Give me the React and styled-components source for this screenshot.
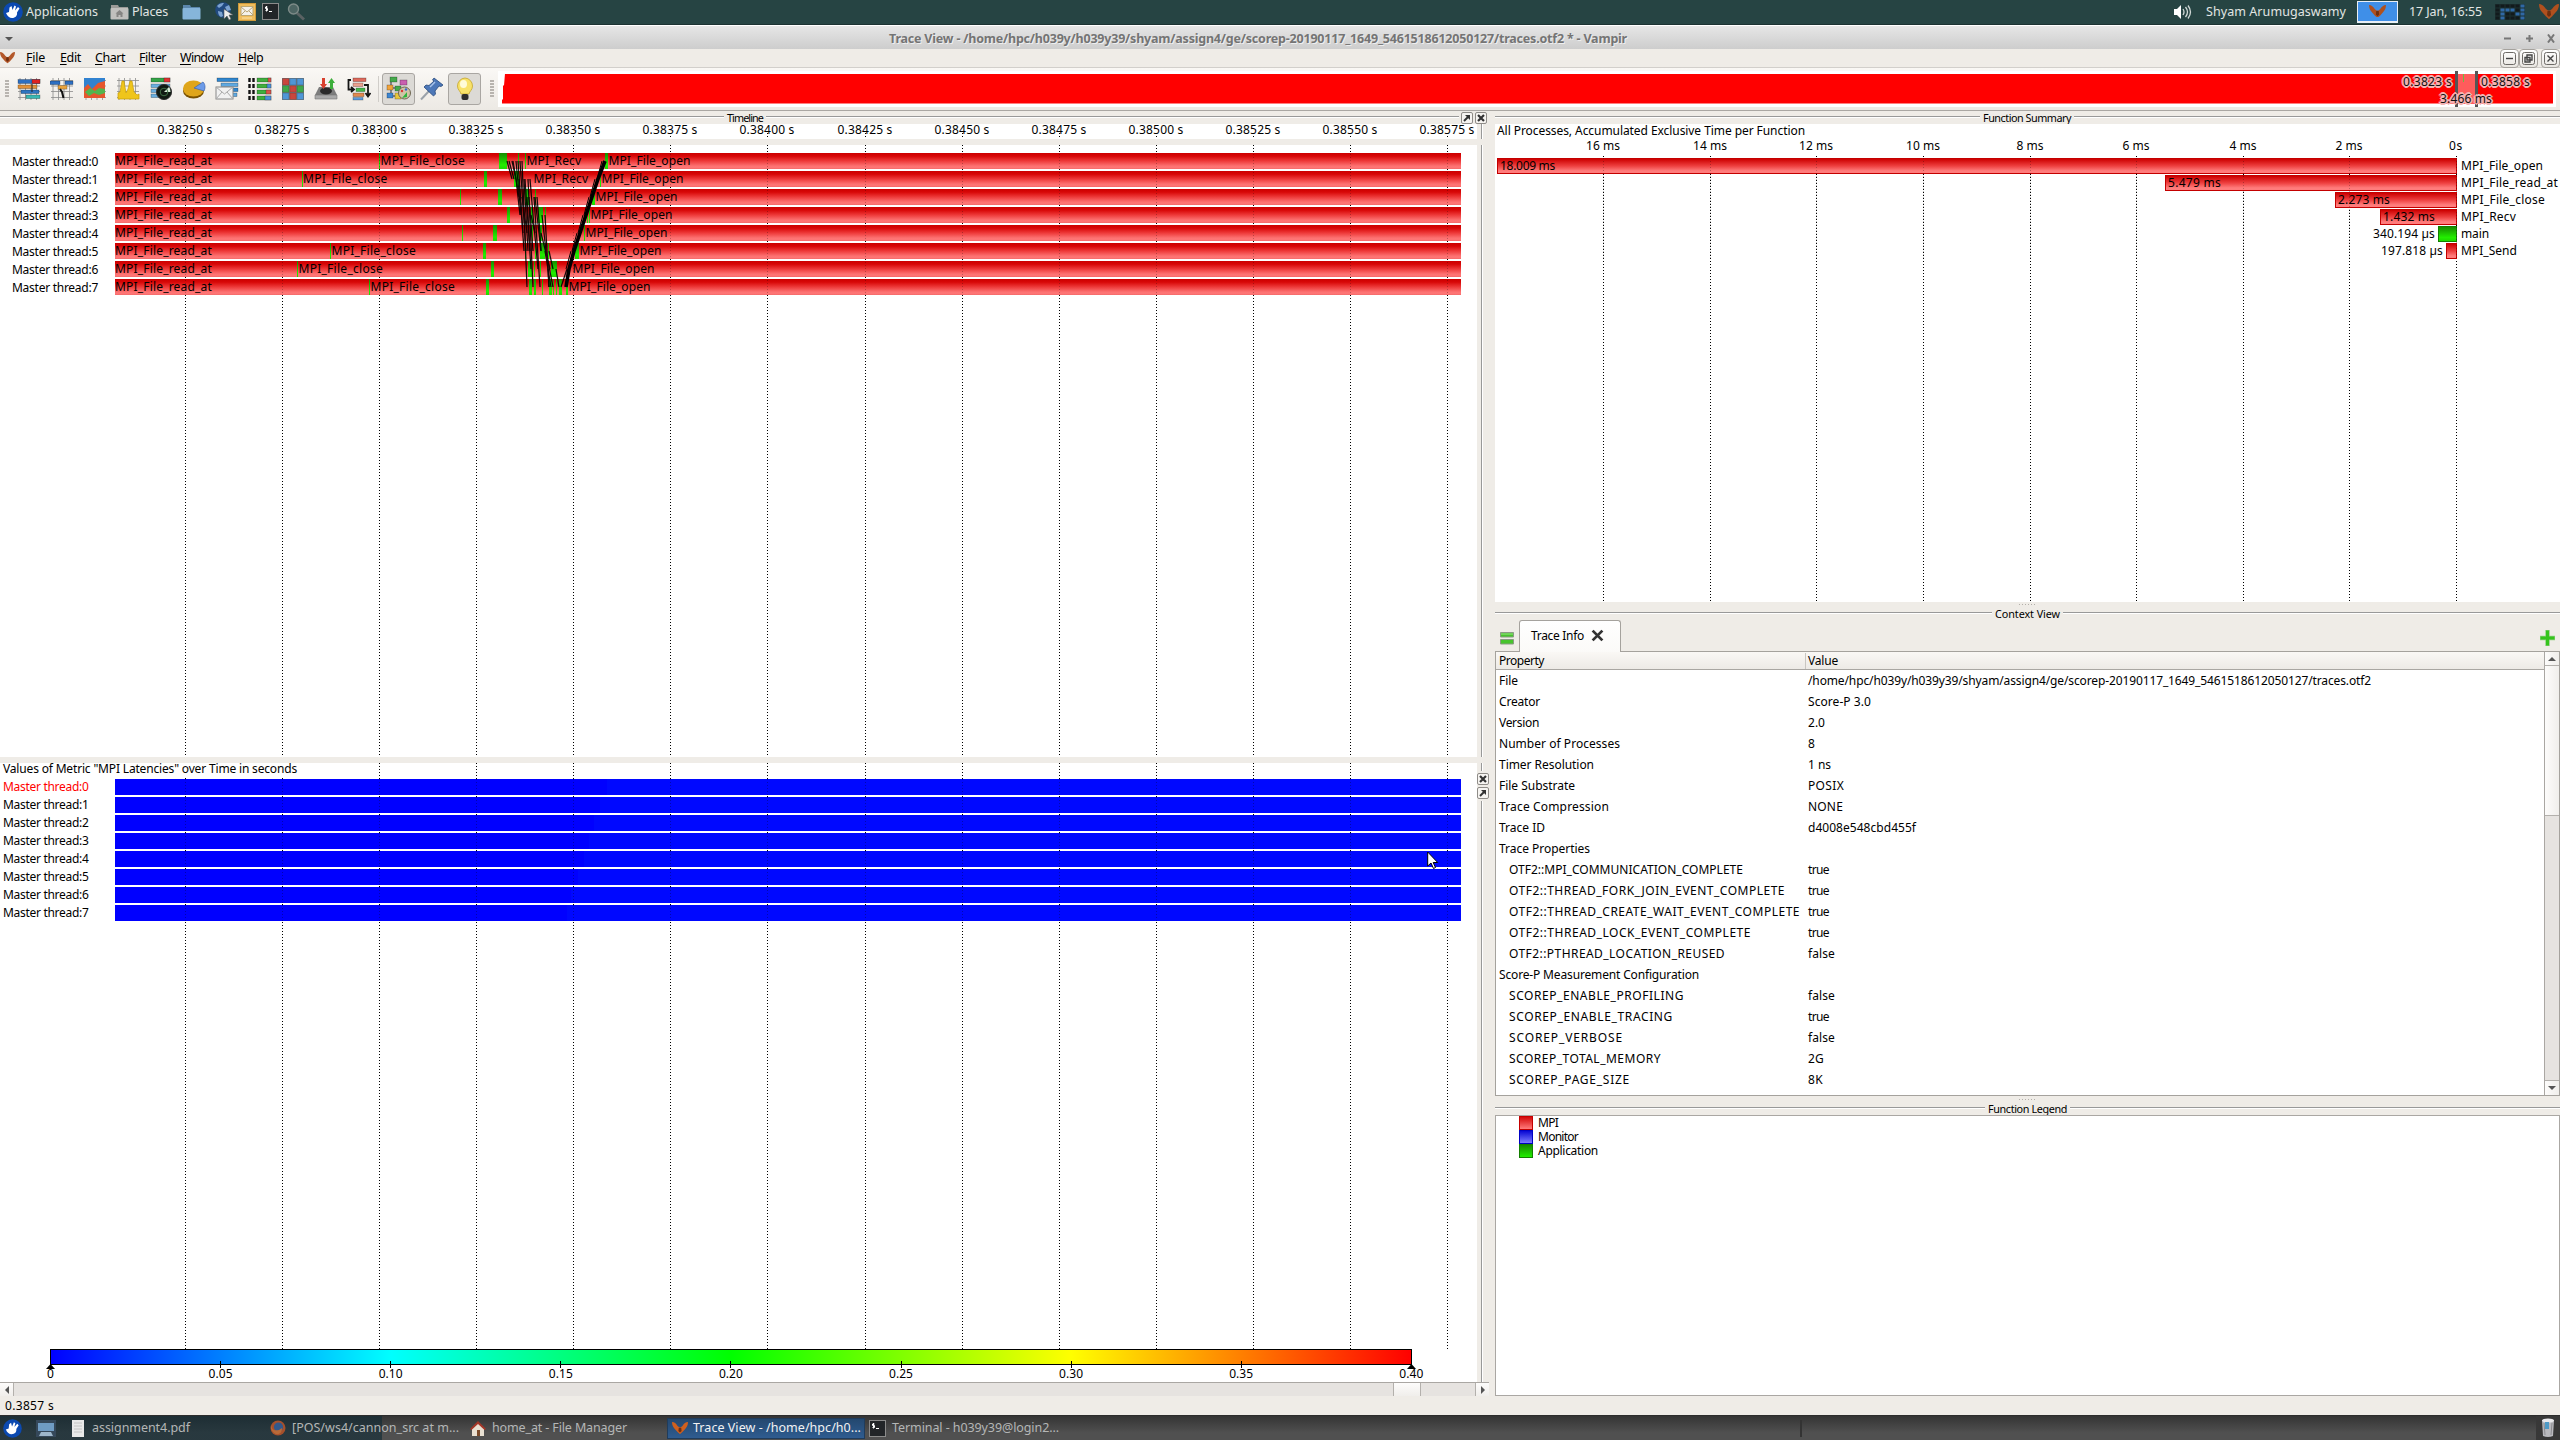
import React, { useLayoutEffect, useRef } from "react";
import styled, { createGlobalStyle, css } from "styled-components";

const Global = createGlobalStyle`
  * { box-sizing: border-box; }
  html, body { margin: 0; padding: 0; overflow: hidden; background: #efece7; }
  body { font-family: "Noto Sans", "Open Sans", sans-serif; font-size: 12px; color: #000; }
  svg { display: block; flex: none; }
`;

/* Text tracked out or in so that it fills a given width. */
const Fitted = styled.span`
  display: inline-block;
  white-space: pre;
  line-height: 16px;
  flex: none;
`;
function Fit({ w, children, className }) {
  const ref = useRef(null);
  useLayoutEffect(() => {
    const el = ref.current;
    el.style.width = "auto";
    el.style.letterSpacing = "0px";
    const natural = el.getBoundingClientRect().width;
    el.style.letterSpacing = (w - natural) / Math.max(1, String(children).length) + "px";
    el.style.width = w + "px";
  }, [w, children]);
  return <Fitted ref={ref} className={className}>{children}</Fitted>;
}

/* ---------- frame ---------- */
const Screen = styled.div`
  width: 2560px; height: 1440px; display: flex; flex-direction: column; overflow: hidden; background: #efece7;
`;
const TopPanel = styled.header`
  height: 25px; flex: none; display: flex; align-items: center; padding: 0 1px 1px 3px; font-size: 12.5px;
  background: #264443; border-bottom: 1px solid #1c3232; color: #e2e6e4;
`;
const Space = styled.div`width: ${(p) => p.$w}px; flex: none;`;
const Grow = styled.div`flex: 1;`;
const PagerCell = styled.div`
  width: 41px; height: 22px; border: 1px solid #e8eef5; border-bottom-width: 2px; background: #3f8fe8;
  display: flex; align-items: center; justify-content: center;
`;
const TitleBar = styled.div`
  height: 24px; flex: none; display: flex; align-items: center; color: #777;
  border-top: 1px solid #fff; background: linear-gradient(#e6e6e6, #cdcdcd); padding: 2px 4px 0 5px;
`;
const TitleText = styled(Fit)`
  font-weight: 700; font-size: 12.5px; color: #747474; text-shadow: 1px 1px 0 #efefef;
`;
const MenuBar = styled.nav`
  height: 19px; flex: none; display: flex; align-items: center; border-bottom: 1px solid #d2cfcb; background: #efece7; padding-left: 0;
`;
const MenuItem = styled(Fit)`
  font-size: 12.5px; line-height: 16px; margin: 0 ${(p) => p.$gap}px 0 0;
  &::first-letter { text-decoration: underline; text-underline-offset: 2px; }
`;
const MdiButton = styled.span`
  width: 19px; height: 19px; border: 1px solid #a5a29d; border-radius: 4px; background: linear-gradient(#fff, #e9e6e1);
  display: flex; align-items: center; justify-content: center; margin-left: ${(p) => p.$gap || 0}px;
`;
const Toolbar = styled.div`
  height: 43px; flex: none; display: flex; align-items: center; padding: 0 4px 1px 5px;
  background: linear-gradient(#faf8f5, #ece9e4); border-bottom: 1px solid #aaa7a3;
`;
const Grip = styled.span`
  width: 4px; height: 18px; flex: none;
  background: radial-gradient(circle at 1px 1px, #b8b4af 0.8px, transparent 1px) 0 0 / 2px 3px;
`;
const Tool = styled.span`
  width: 33px; height: 32px; flex: none; display: flex; align-items: center; justify-content: center;
  ${(p) => p.$on && css`background: #dcdad6; border: 1px solid #a9a6a2; border-radius: 3px;`}
`;
const ToolSep = styled.span`width: 1px; height: 26px; background: #d0cdc9; margin: 0 3px;`;
const Overview = styled.div`
  position: relative; height: 36px; width: 2058px; background: #fff; padding: 3px 3px 3px 4px;
`;
const OverviewFill = styled.div`
  height: 30px; background: #f00; clip-path: polygon(3px 0, 100% 0, 100% 100%, 0 100%, 0 26px, 1px 26px, 1px 12px, 2px 12px);
`;
const Selection = styled.div`
  position: absolute; left: 1957px; top: 0; width: 23px; height: 36px;
  border: solid #555; border-width: 0 3px; background: linear-gradient(#fff 3px, #ff5c5c 3px 33px, #fff 33px);
  &::after { content: ""; position: absolute; left: 5px; top: 3px; width: 1px; height: 8px; background: #6abf40; }
`;
const HaloText = styled.span`
  position: absolute; left: ${(p) => p.$x}px; top: ${(p) => p.$y}px; color: #111;
  text-shadow: -1px -1px 0 #f3b4b4, 1px -1px 0 #f3b4b4, -1px 1px 0 #f3b4b4, 1px 1px 0 #f3b4b4, -2px 0 0 #f3b4b4, 2px 0 0 #f3b4b4, 0 -2px 0 #f3b4b4, 0 2px 0 #f3b4b4;
`;
const Main = styled.main`
  height: 1285px; flex: none; display: flex; gap: 6px;
`;
const LeftColumn = styled.section`width: 1489px; display: flex; flex-direction: column; flex: none;`;
const RightColumn = styled.section`width: 1065px; display: flex; flex-direction: column; flex: none;`;

/* ---------- docks ---------- */
const Header = styled.div`
  height: 13px; flex: none; display: flex; align-items: flex-start;
`;
const HeaderRule = styled.span`
  height: 2px; margin-top: 5px; background: linear-gradient(#999 50%, #fff 50%);
  ${(p) => (p.$w ? `width: ${p.$w}px; flex: none;` : "flex: 1;")}
`;
const HeaderText = styled(Fit)`margin: 0 3px; font-size: 10.8px; line-height: 13px;`;
const DockButton = styled.span`
  width: 12px; height: 12px; margin: ${(p) => p.$m || "1px 0 0 2px"}; flex: none; border: 1px solid #8f8c88; border-radius: 2px;
  background: #f6f4f1; display: flex; align-items: center; justify-content: center;
`;
const DockRow = styled.div`height: ${(p) => p.$h}px; margin-bottom: ${(p) => p.$gap || 0}px; display: flex; flex: none;`;
const Side = styled.div`
  width: 12px; display: flex; flex-direction: column; align-items: center;
`;
const SideRule = styled.div`
  width: 2px; margin-right: 2px; background: linear-gradient(90deg, #999 50%, #fff 50%);
  ${(p) => (p.$h ? `height: ${p.$h}px; flex: none;` : "flex: 1;")}
`;
const Canvas = styled.div`position: relative; width: ${(p) => p.$w || 1477}px; background: #fff; flex: none;`;
const TickLabel = styled.div`
  position: absolute; top: ${(p) => p.$top}px; transform: translateX(-50%); line-height: 12px;
`;
const RulerText = styled(Fit)`line-height: 12px; display: block;`;
const GridLine = styled.i`
  position: absolute; width: 1px; top: ${(p) => p.$top || 0}px; bottom: ${(p) => p.$bottom || 0}px; opacity: ${(p) => p.$o || 1};
  background: repeating-linear-gradient(#000 0 1px, transparent 1px 3px);
`;
const Rows = styled.div`display: flex; flex-direction: column; gap: ${(p) => p.$gap || 2}px; padding-top: ${(p) => p.$top}px; position: relative;`;
const Row = styled.div`display: flex; height: 16px;`;
const RowLabel = styled.div`
  width: 115px; flex: none; padding-left: ${(p) => p.$x}px; color: ${(p) => (p.$hot ? "#f00" : "#000")}; margin-top: ${(p) => p.$up || 0}px;
`;
const red = "linear-gradient(#cc0000 0, #d80808 20%, #ee3a3a 50%, #fb6c6c 78%, #ff7878 88%, #f56a6a 100%)";
const green = "linear-gradient(#178a00, #22ee00 75%, #1fd800)";
const Track = styled.div`position: relative; width: 1346px; height: 16px; background: ${(p) => (p.$metric ? "#0000ff" : red)};`;
const Event = styled.i`position: absolute; top: 0; height: 16px; background: ${(p) => (p.$late ? "#0008ff" : green)};`;
const EventLabel = styled.span`position: absolute; top: 0; line-height: 16px;`;
const Messages = styled.svg`position: absolute; left: 480px; top: 0;`;
const MetricTitle = styled.div`position: absolute; left: 0; top: 0; height: 14px; padding: 0 3px; background: #fff; z-index: 1;`;
const Scale = styled.div`
  position: absolute; left: 50px; top: 586px; width: 1362px; height: 16px; border: 1px solid #000;
  background: linear-gradient(90deg, #00f, #0ff 25%, #0f0 50%, #ff0 75%, #f00);
`;
const ScaleTick = styled.div`
  position: absolute; top: ${(p) => (p.$end ? 14 : 11)}px; width: ${(p) => (p.$end ? 9 : 1)}px; height: ${(p) => (p.$end ? 5 : 7)}px;
  background: #000; ${(p) => p.$end && "clip-path: polygon(50% 0, 100% 100%, 0 100%); margin-left: -4px;"}
`;
const HScroll = styled.div`
  height: 14px; flex: none; display: flex; border-top: 1px solid #aaa7a3; background: #e6e3e0;
`;
const HPiece = styled.div`
  width: ${(p) => p.$w}px; display: flex; align-items: center; justify-content: center; flex: none;
  background: linear-gradient(#fdfcfb, #f0eeeb); border: solid #b3b0ac; border-width: ${(p) => p.$b || "0 1px"};
`;
const SplitGrip = styled.div`
  height: ${(p) => p.$h}px; flex: none; display: flex; justify-content: center; align-items: center;
  &::after { content: ""; width: 17px; height: 1px; background: repeating-linear-gradient(90deg, #b3afaa 0 1px, transparent 1px 3px); }
`;
const SumBar = styled.div`
  height: 16px; border: 1px solid ${(p) => (p.$g ? "#137f00" : "#c40000")};
  background: ${(p) => (p.$g ? green : "linear-gradient(#cc0000, #ee4040 50%, #ff7c7c 85%)")}; padding-left: 2px; display: flex; align-items: center;
`;
const SumRow = styled.div`display: flex; height: 16px; align-items: center; padding-left: 2px;`;
const SumLeft = styled.div`width: 960px; display: flex; justify-content: flex-end; align-items: center; gap: 3px; margin-right: 4px;`;
const Title = styled.div`position: absolute; left: 2px; top: -2px;`;

const Tabs = styled.div`height: 31px; flex: none; display: flex; align-items: flex-end; padding: 0 5px 0 5px;`;
const Tab = styled.div`
  width: 102px; height: 32px; margin: 0 0 -1px 5px; border: 1px solid #a5a29d; border-bottom: 0; border-radius: 3px 3px 0 0;
  background: linear-gradient(#fff, #fbfaf8); display: flex; align-items: center; justify-content: space-between; padding: 0 16px 2px 11px; z-index: 1;
`;
const TabIcon = styled.div`padding-bottom: ${(p) => p.$b}px;`;
const Table = styled.div`
  height: 445px; flex: none; display: flex; border: 1px solid #a5a29d; background: #fff;
`;
const TableBody = styled.div`flex: 1; display: flex; flex-direction: column;`;
const HeadRow = styled.div`
  height: 18px; display: flex; align-items: center; border-bottom: 1px solid #a9a6a2; background: linear-gradient(#faf8f5, #edeae6); padding-left: 3px; flex: none;
`;
const Line = styled.div`height: 21px; display: flex; align-items: center; padding-left: 3px; flex: none;`;
const Prop = styled.div`width: 309px; padding-left: ${(p) => (p.$in ? 10 : 0)}px; flex: none; display: flex;`;
const HeadCell = styled(Prop)`width: 307px; border-right: 1px solid #c9c6c2; margin-right: 2px;`;
const VScroll = styled.div`
  width: 15px; border-left: 1px solid #aaa7a3; background: #e6e3e0; display: flex; flex-direction: column; flex: none;
`;
const VPiece = styled.div`
  height: ${(p) => p.$h}px; flex: none; background: linear-gradient(90deg, #fdfcfb, #f0eeeb); border: solid #b3b0ac;
  border-width: ${(p) => p.$b}; display: flex; align-items: center; justify-content: center;
`;
const Legend = styled.div`
  height: 281px; flex: none; background: #fff; border: 1px solid #aaa7a3; padding-left: 23px; display: flex; flex-direction: column;
`;
const LegendRow = styled.div`height: 14px; display: flex; align-items: center; gap: 5px;`;
const Swatch = styled.span`width: 14px; height: 14px; border: 1px solid ${(p) => p.$e}; background: linear-gradient(${(p) => p.$a}, ${(p) => p.$z});`;
const Status = styled.footer`height: 19px; flex: none; padding: 1px 5px;`;
const TaskBar = styled.div`
  height: 25px; flex: none; display: flex; align-items: center; color: #b4b6b6; border-top: 1px solid #2c2c2c; font-size: 12.5px;
  background: linear-gradient(90deg, rgba(16, 42, 52, 0.62) 382px, transparent 382px), linear-gradient(#343434, #505050 70%);
`;
const Task = styled.div`
  display: flex; align-items: center; width: ${(p) => p.$w}px; height: 21px; flex: none; padding-left: 4px; gap: ${(p) => p.$g || 6}px;
  ${(p) => p.$on && "background: linear-gradient(#24486f, #2f5c90); border: 1px solid #1f3c5c; color: #f2f2f2;"}
`;
const TaskSep = styled.span`width: 2px; height: 17px; background: #333;`;
const TrashCell = styled.div`width: 24px; height: 24px; background: #383838; display: flex; align-items: center; justify-content: center;`;
const Pointer = styled.svg`position: absolute; left: 1427px; top: 88px; z-index: 2;`;

/* ---------- icons ---------- */
const Mouse = ({ s = 20 }) => (
  <svg width={s} height={s} viewBox="0 0 20 20"><circle cx="10" cy="10" r="9.8" fill="#0b49b0" />
    <path d="M3 11l3-1 .5-4.500 2-1.500 1 4 2-4.500 1.500 1-1 4 3-3.500 1.500 1.500-2.500 4c.5 3-1.500 5.500-5 5.500-2.500 0-4.500-1.500-6-5z" fill="#fff" /></svg>
);
const Folder = ({ home }) => (
  <svg width="19" height="16" viewBox="0 0 19 16">
    <path d="M1 1h7l1 2h9v12H1z" fill={home ? "#9b9b98" : "#5b87ac"} />
    <rect x="0.5" y="4" width="18" height="11.5" rx="1" fill={home ? "#c0c0bd" : "#86b5da"} />
    {home && <path d="M9.5 6l4 3.5h-1V13h-2v-2h-2v2h-2V9.500h-1z" fill="#858583" />}
  </svg>
);
const Globe = () => (
  <svg width="19" height="19" viewBox="0 0 19 19"><circle cx="8" cy="8" r="7.8" fill="#214a80" />
    <path d="M2 4c3-3 5-3 7-3l-2 3-3 2zM3 9l4 1 1 4-2 1c-2-1-3-3-3-6zM10 5l4-2 2 5-4 1z" fill="#7da3d0" />
    <path d="M9 7v10l3-3 2 4 2-1-2-4h4z" fill="#eee" stroke="#555" strokeWidth=".6" /></svg>
);
const Mail = () => (
  <svg width="18" height="18" viewBox="0 0 18 18"><rect x=".5" y=".5" width="17" height="17" fill="#f0bd5c" stroke="#cf9a3a" />
    <rect x="3" y="3.500" width="12" height="9" fill="#f4f1ea" stroke="#bda873" /><path d="M3 4l6 5 6-5M3 12l4-4M15 12l-4-4" fill="none" stroke="#b9a678" /><path d="M4 15h10" stroke="#fbe2a8" /></svg>
);
const Term = () => (
  <svg width="17" height="17" viewBox="0 0 17 17"><rect x=".5" y=".5" width="16" height="16" fill="#222528" stroke="#8b8b8b" />
    <path d="M5.500 4H3.500v1.500h2v2h-2M4.500 3v5.500M7 8.500h3" stroke="#fff" fill="none" /></svg>
);
const Lens = () => (
  <svg width="18" height="18" viewBox="0 0 18 18"><path d="M10 10l7 6.500" stroke="#5a6263" strokeWidth="3" />
    <circle cx="6.500" cy="6" r="5" fill="#4d6563" stroke="#7e8b88" strokeWidth="1.400" /></svg>
);
const Fly = ({ w = 20, c = "#b0501e" }) => (
  <svg width={w} height={w * 0.76} viewBox="0 0 20 15"><path d="M0 0c3 0 5 2 7 5l2 1.500h2L13 5c2-3 4-5 7-5 0 4-1.500 6.500-3.500 8.500L13 12.500 10 15l-3-2.500-3.500-4C1.500 6.500 0 4 0 0z" fill={c} /><path d="M8.500 7h3l.5 4-2 2-2-2z" fill="#6e2f10" /></svg>
);
const Speaker = () => (
  <svg width="19" height="16" viewBox="0 0 19 16"><path d="M1 5h3l4-4v14l-4-4H1z" fill="#fff" />
    <path d="M10 5q2 3 0 6M12.500 3q4 5 0 10M15 1.500q5 6.500 0 13" fill="none" stroke="#cfd7d5" strokeWidth="1.300" /></svg>
);
const cpuLit = [5, 7, 8, 9, 11, 13, 16, 17, 19, 23];
const CpuGrid = () => (
  <svg width="30" height="16" viewBox="0 0 30 16"><rect width="30" height="16" fill="#1d3030" />
    {Array.from({ length: 24 }, (_, i) => (
      <rect key={i} x={(i % 6) * 5 + 0.5} y={Math.floor(i / 6) * 4 + 0.5} width="4" height="3" fill={cpuLit.includes(i) ? "#2f68a5" : "#121a1c"} />
    ))}</svg>
);
const Frame = ({ children }) => (
  <svg width="24" height="24" viewBox="0 0 24 24">
    <path d="M3 1v22M1 20.500h22M8.500 1v22M14 1v22M19.500 1v22M1 3.500h22M1 9h22M1 14.500h22" stroke="#8a8a8a" strokeWidth=".8" />{children}</svg>
);
const Bar = ({ x, y, w, h = 3.6, c }) => <rect x={x} y={y} width={w} height={h} fill={c} stroke="#00000066" strokeWidth=".6" />;
const matrix = ["#c9463d", "#4f96d6", "#4f96d6", "#3fa84a", "#c9463d", "#3fa84a", "#4f96d6", "#c9463d", "#4f96d6"];
const tools = [
  <Frame><Bar x="1" y="2.500" w="22" h={4} c="#2d6fc2" /><Bar x="15" y="2.500" w="8" h={4} c="#d22" /><Bar x="1" y="8" w="19" c="#e0913a" /><Bar x="4" y="13" w="18" c="#2f75c0" /><Bar x="9" y="18" w="14" c="#39b7b2" /><path d="M15 7v8" stroke="#222" /></Frame>,
  <Frame><Bar x="0" y="4" w="10" c="#2d6fc2" /><Bar x="15" y="4" w="8" c="#2d6fc2" /><Bar x="8" y="8.500" w="9" c="#e9a33c" /><path d="M10 12l2 3 1.500 6" stroke="#111" strokeWidth="2" fill="none" /></Frame>,
  <Frame><rect x="1" y="1" width="21" height="20" fill="#3182d0" /><path d="M1 11l4-4 4 5 6-6 7-2v17H1z" fill="#e5562d" /><path d="M2 15l5-4 5 3 4-3 6 1v4l-6 2-5-2-5 3z" fill="#52b54d" /></Frame>,
  <Frame><path d="M2 22V16l2-1 2-11 2 0 2 12 2-4 2-8h2l2 11 3 3 2-1v5z" fill="#efc51b" stroke="#c79e0a" strokeWidth=".7" /></Frame>,
  <svg width="24" height="24" viewBox="0 0 24 24"><Bar x="2" y="1" w="19" h={4} c="#34a347" /><Bar x="15" y="1" w="6" h={4} c="#d33" /><Bar x="2" y="7" w="19" c="#6aaede" /><Bar x="2" y="12" w="10" c="#6aaede" /><Bar x="2" y="17" w="10" c="#6aaede" /><circle cx="15" cy="15" r="7.600" fill="#101a12" stroke="#333" /><path d="M15 15l5-5a7 7 0 0 1 1.500 5z" fill="#d8ecd8" /><circle cx="15" cy="15" r="3.800" fill="none" stroke="#3f6f45" /></svg>,
  <svg width="24" height="24" viewBox="0 0 24 24"><ellipse cx="11.500" cy="14" rx="10.500" ry="7.500" fill="#7a5200" /><ellipse cx="11.500" cy="11.500" rx="10.500" ry="8" fill="#dfa51a" /><path d="M12 11l9-6c3 3 2 7 1 9z" fill="#6d9be8" stroke="#3862ad" strokeWidth=".7" /></svg>,
  <svg width="24" height="24" viewBox="0 0 24 24"><Bar x="2" y="1" w="21" c="#2f86cf" /><Bar x="6" y="6" w="17" c="#5fa8e0" /><Bar x="12" y="11" w="11" c="#2f86cf" /><Bar x="14" y="16" w="8" c="#5fa8e0" /><rect x="1" y="10" width="17" height="12" fill="#f1f1f1" stroke="#888" /><path d="M1 10l8.500 7 8.500-7M1 22l6-7M18 22l-6-7" fill="none" stroke="#aaa" /></svg>,
  <svg width="24" height="24" viewBox="0 0 24 24">{[1, 7, 13, 19].map((y, i) => <g key={y}><path d={`M1.500 ${y}v4M5.500 ${y}v4`} stroke="#111" strokeWidth="2.400" /><Bar x="9" y={y} w="14" h={4} c="#3fae3f" /><Bar x={20 - i} y={y} w={3 + i} h={4} c={i % 2 ? "#4a90d9" : "#d9534a"} /></g>)}</svg>,
  <svg width="24" height="24" viewBox="0 0 24 24"><rect x="1" y="1" width="22" height="22" fill="#8c9499" />{matrix.map((c, i) => <rect key={i} x={1.500 + (i % 3) * 7.250} y={1.500 + Math.floor(i / 3) * 7.250} width="6.500" height="6.500" fill={c} stroke="#0003" />)}</svg>,
  <svg width="24" height="24" viewBox="0 0 24 24"><path d="M5 10h14l4 8v4H1v-4z" fill="#7d7d7d" /><path d="M1 18h22v4H1z" fill="#a9a9a9" stroke="#777" strokeWidth=".6" /><ellipse cx="12" cy="14" rx="6" ry="3.500" fill="#2a2a2a" /><path d="M8 1h3v6h2l-3.500 5L6 7h2z" fill="#d8412f" /><path d="M16 12V6h-2l3.500-5L21 6h-2v6z" fill="#3dae3b" /></svg>,
  <svg width="24" height="24" viewBox="0 0 24 24"><Bar x="6" y="1" w="13" c="#dd6a5c" /><Bar x="6" y="6" w="10" c="#e9a08e" /><Bar x="9" y="11" w="9" c="#45b74c" /><Bar x="6" y="16" w="11" c="#e08950" /><Bar x="6" y="20.500" w="10" h={2.500} c="#5a9be0" /><path d="M4 3H1.500v9.500H6M4 10l3 2.500-3 2.500M17 8h4v10M18.500 16l2.500 3.500 2.500-3.500" stroke="#151515" strokeWidth="1.800" fill="none" /></svg>,
];
const Tree = () => (
  <svg width="25" height="25" viewBox="0 0 25 25"><path d="M5 4v17M5 5h5M5 12h5M5 20h5" stroke="#333" /><Bar x="4" y="1" w="7" h={5} c="#45a94b" /><Bar x="1" y="9" w="6" h={5} c="#f1a33a" /><Bar x="9" y="10" w="6" h={5} c="#45a94b" /><Bar x="9" y="17" w="6" h={6} c="#e8c63a" /><Bar x="1" y="17" w="6" h={5} c="#3d86d2" /><Bar x="14" y="4" w="7" h={5} c="#c95fb0" /><circle cx="18.500" cy="17" r="6" fill="#cfc4a6" stroke="#6d6552" /><path d="M16 22l5-6v5z" fill="#2cb53c" /><circle cx="16" cy="15" r="1.200" fill="#d33" /><circle cx="20" cy="13.500" r="1.200" fill="#36c" /></svg>
);
const Pin = () => (
  <svg width="24" height="24" viewBox="0 0 24 24"><path d="M9 14l-8 8.500" stroke="#9aa2aa" strokeWidth="2" /><path d="M14 1l9 7-2 1.500-2-.5-4 5 .5 3-2 2L4 10l2-2 3 .5 5-4.500-1.500-1z" fill="#4d78b8" stroke="#27497c" strokeWidth=".8" /><path d="M10 10l5-5" stroke="#a9c4ea" strokeWidth="1.500" /></svg>
);
const Bulb = () => (
  <svg width="24" height="24" viewBox="0 0 24 24"><path d="M12 1a8 8 0 0 1 7.500 8c0 4-3 5-3.500 8H8c-.5-3-3.500-4-3.500-8A8 8 0 0 1 12 1z" fill="#f8e26a" stroke="#c5a62a" strokeWidth=".8" /><ellipse cx="10.500" cy="7" rx="3.500" ry="4" fill="#fffbd8" /><rect x="8.500" y="17" width="7" height="6" rx="2" fill="#2d2d2d" /></svg>
);
const Cross = ({ s = 8, w = 2.2 }) => <svg width={s} height={s} viewBox="0 0 8 8"><path d="M1 1l6 6M7 1L1 7" stroke="#333" strokeWidth={w} /></svg>;
const Detach = () => <svg width="8" height="8" viewBox="0 0 8 8"><path d="M1 7l4-4" stroke="#333" strokeWidth="2" /><path d="M2 1h5v5z" fill="#333" /></svg>;
const Tri = ({ d }) => <svg width="8" height="8" viewBox="0 0 8 8"><path fill="#555" d={{ l: "M6 0v8L2 4z", r: "M2 0v8l4-4z", u: "M0 6h8L4 2z", d: "M0 2h8L4 6z" }[d]} /></svg>;
const WinMark = ({ d }) => <svg width="9" height="9" viewBox="0 0 9 9"><path d={d} stroke="#777" strokeWidth="2" fill="none" /></svg>;
const MdiMark = ({ d }) => <svg width="13" height="13" viewBox="0 0 13 13"><rect x=".5" y=".5" width="12" height="12" rx="2" fill="none" stroke="#6d6a66" /><path d={d} stroke="#444" strokeWidth="1.400" fill="none" /></svg>;
const DesktopIcon = () => <svg width="20" height="17" viewBox="0 0 20 17"><rect width="20" height="17" fill="#35485a" /><rect x="2" y="3" width="16" height="8" fill="#6f9cc4" /><path d="M3 16l2-4h10l2 4" fill="#9db6ca" /></svg>;
const Page = () => <svg width="12" height="17" viewBox="0 0 12 17"><rect width="12" height="17" fill="#e9e9e9" /><path d="M2 3h8M2 6h8M2 9h8M2 12h8" stroke="#c4c4c4" /></svg>;
const Fox = () => <svg width="16" height="16" viewBox="0 0 16 16"><circle cx="8" cy="8" r="7.500" fill="#a5502c" /><circle cx="8.500" cy="7" r="4.600" fill="#33598c" /><path d="M1 5c1 5 3 6 8 5l3-2c0 5-3 7-6 6S0 9 1 5z" fill="#b96a38" /></svg>;
const House = () => <svg width="16" height="16" viewBox="0 0 16 16"><path d="M2 8v8h12V8L8 2z" fill="#e8e0d2" /><path d="M0 9l8-8 8 8-1.500 1L8 4 1.500 10z" fill="#a33628" /><rect x="7" y="10" width="3" height="6" fill="#7a4a2a" /></svg>;
const Trash = () => <svg width="14" height="20" viewBox="0 0 14 20"><path d="M1 2h12l-1 16q-5 2-10 0z" fill="#b9b9be" /><ellipse cx="7" cy="2.500" rx="6" ry="2" fill="#e9e9ec" /><rect x="4" y="4" width="4" height="7" fill="#4e9ac6" /><path d="M3 5l1 12M11 5l-1 12" stroke="#8b8b90" /></svg>;

/* ---------- data ---------- */
const timeTicks = Array.from({ length: 14 }, (_, i) => ({ x: Math.round(185 + i * 97.08), t: (0.3825 + i * 0.00025).toFixed(5) + " s" }));
const threads = [
  { ev: [[379, 1], [499, 8], [517.500, 1], [525, 1], [605, 3]], labels: [["MPI_File_close", 380], ["MPI_Recv", 526], ["MPI_File_open", 608]] },
  { ev: [[302, 1], [484, 3], [514, 5], [600, 1]], labels: [["MPI_File_close", 302.500], ["MPI_Recv", 533], ["MPI_File_open", 601]] },
  { ev: [[460, 1], [498, 4], [525, 4], [535, 1], [592, 3]], labels: [["MPI_File_open", 595]] },
  { ev: [[507, 3], [531, 2], [538, 5], [545, 1], [587, 1], [589, 1]], labels: [["MPI_File_open", 590]] },
  { ev: [[462, 1], [493, 4], [532, 1], [539, 3], [584, 1]], labels: [["MPI_File_open", 585]] },
  { ev: [[330, 1], [483, 3], [525, 1], [535, 1], [540, 5], [548, 1], [575, 4]], labels: [["MPI_File_close", 331], ["MPI_File_open", 579]] },
  { ev: [[297, 1], [491, 3], [528, 4], [534, 1], [540, 1], [551, 6]], labels: [["MPI_File_close", 298], ["MPI_File_open", 572]] },
  { ev: [[369, 1], [486, 3], [529, 3], [534, 2], [542, 1], [549, 2.500], [553, 1], [555.500, 1], [559, 3], [566, 2]], labels: [["MPI_File_close", 370], ["MPI_File_open", 568]] },
];
const labelWidth = { MPI_File_close: 84.500, MPI_Recv: 54.700, MPI_File_open: 82 };
const metricSplit = [607, 600, 594, 589, 584, 578, 571, 567];
const messages = [
  [507, 0, 512, 1], [509, 0, 514, 1], [512, 0, 516, 1], [513, 0, 519, 2], [516, 0, 521, 3], [518, 0, 523, 4], [520, 0, 526, 5], [522, 0, 527, 7],
  [516, 1, 520, 3], [519, 1, 524, 5], [524, 1, 528, 5], [525, 1, 531, 6], [528, 1, 533, 7], [530, 1, 533, 3],
  [522, 2, 527, 4], [527, 2, 530, 5], [529, 2, 533, 5], [534, 2, 540, 7], [535, 2, 541, 5], [537, 2, 540, 4],
  [531, 3, 535, 4], [533, 3, 538, 6], [542, 3, 546, 5], [545, 3, 549, 7], [541, 4, 550, 6], [540, 4, 541, 5],
  [545, 5, 551, 7], [546, 5, 553, 7], [549, 5, 553, 6], [548, 6, 549, 7], [556, 6, 559, 7], [567, 6, 561, 7],
];
const spine = [[605, 0], [598, 1], [592, 2], [586, 3], [580, 4], [574, 5], [569, 6], [566, 7]];
const cy = (r) => 16 + r * 18;
const summary = [
  ["MPI_File_open", 82, "18.009 ms", 55, 960], ["MPI_File_read_at", 97, "5.479 ms", 53, 292], ["MPI_File_close", 84, "2.273 ms", 52, 122],
  ["MPI_Recv", 55, "1.432 ms", 52, 77], ["main", 28, "340.194 µs", 62, 19, true], ["MPI_Send", 56, "197.818 µs", 62, 11],
];
const properties = [
  ["File", 19, "/home/hpc/h039y/h039y39/shyam/assign4/ge/scorep-20190117_1649_5461518612050127/traces.otf2", 563],
  ["Creator", 41, "Score-P 3.0", 63], ["Version", 40, "2.0", 17], ["Number of Processes", 121, "8", 7], ["Timer Resolution", 95, "1 ns", 23],
  ["File Substrate", 76, "POSIX", 36], ["Trace Compression", 110, "NONE", 35], ["Trace ID", 46, "d4008e548cbd455f", 108], ["Trace Properties", 91],
  ["OTF2::MPI_COMMUNICATION_COMPLETE", 234, "true", 21, 1], ["OTF2::THREAD_FORK_JOIN_EVENT_COMPLETE", 276, "true", 21, 1],
  ["OTF2::THREAD_CREATE_WAIT_EVENT_COMPLETE", 291, "true", 21, 1], ["OTF2::THREAD_LOCK_EVENT_COMPLETE", 242, "true", 21, 1],
  ["OTF2::PTHREAD_LOCATION_REUSED", 216, "false", 27, 1], ["Score-P Measurement Configuration", 200],
  ["SCOREP_ENABLE_PROFILING", 175, "false", 27, 1], ["SCOREP_ENABLE_TRACING", 164, "true", 21, 1], ["SCOREP_VERBOSE", 114, "false", 27, 1],
  ["SCOREP_TOTAL_MEMORY", 152, "2G", 16, 1], ["SCOREP_PAGE_SIZE", 121, "8K", 15, 1],
];

function Grid({ ticks, ...rest }) {
  return ticks.map((t) => <GridLine key={t.x} style={{ left: t.x }} {...rest} />);
}

function Timeline() {
  return (
    <>
      <Header>
        <HeaderRule $w={724} /><HeaderText w={36}>Timeline</HeaderText><HeaderRule $w={693} />
        <DockButton><Detach /></DockButton><DockButton><Cross /></DockButton>
      </Header>
      <DockRow $h={15} $gap={6}>
        <Canvas>
          {timeTicks.map((t) => (
            <React.Fragment key={t.x}>
              <TickLabel $top={0} style={{ left: t.x }}><RulerText w={55}>{t.t}</RulerText></TickLabel>
              <GridLine $top={9} $bottom={2} style={{ left: t.x }} />
            </React.Fragment>
          ))}
        </Canvas>
        <Side><SideRule /></Side>
      </DockRow>
      <DockRow $h={612} $gap={6}>
        <Canvas>
          <Grid ticks={timeTicks} />
          <Rows $top={8}>
            {threads.map((th, i) => (
              <Row key={i}>
                <RowLabel $x={12}><Fit w={86}>{"Master thread:" + i}</Fit></RowLabel>
                <Track>
                  {th.ev.map(([x, w]) => <Event key={x} style={{ left: x - 115, width: w }} />)}
                  <EventLabel><Fit w={97}>MPI_File_read_at</Fit></EventLabel>
                  {th.labels.map(([t, x]) => <EventLabel key={t} style={{ left: x - 115 + 0.5 }}><Fit w={labelWidth[t]}>{t}</Fit></EventLabel>)}
                </Track>
              </Row>
            ))}
          </Rows>
          <Grid ticks={timeTicks} $o={0.25} />
          <Messages width="140" height="160" viewBox="480 0 140 160">
            <g stroke="#000" strokeWidth="1.250" opacity=".9">
              {messages.map(([a, r, b, s], i) => <line key={i} x1={a} y1={cy(r)} x2={b} y2={cy(s)} />)}
            </g>
            <polyline points={spine.map(([x, r]) => `${x},${cy(r)}`).join(" ")} fill="none" stroke="#000" strokeWidth="3.600" />
            <path d={spine.slice(0, 6).map(([x, r]) => `M${x - 3} ${cy(r)}L${x - 8} ${cy(r + 1)}`).join("")} stroke="#000" strokeWidth="1" />
          </Messages>
        </Canvas>
        <Side><SideRule /></Side>
      </DockRow>
    </>
  );
}

function Metric() {
  return (
    <>
      <DockRow $h={619}>
        <Canvas>
          <Grid ticks={timeTicks} $bottom={33} />
          <MetricTitle><RulerText w={294}>Values of Metric "MPI Latencies" over Time in seconds</RulerText></MetricTitle>
          <Rows $top={16}>
            {threads.map((_, i) => (
              <Row key={i}>
                <RowLabel $x={3} $up={-1} $hot={i === 0}><Fit w={85.5}>{"Master thread:" + i}</Fit></RowLabel>
                <Track $metric><Event $late style={{ left: metricSplit[i] - 115, right: 0 }} /></Track>
              </Row>
            ))}
          </Rows>
          <Grid ticks={timeTicks} $top={16} $bottom={460} $o={0.3} />
          <Scale>
            {Array.from({ length: 9 }, (_, i) => (
              <React.Fragment key={i}>
                <ScaleTick $end={i % 8 === 0} style={{ left: Math.round(i * 170.1) - 1 }} />
                <TickLabel $top={18} style={{ left: i * 170.1 - 0.5 }}><RulerText w={i ? 24 : 7}>{i ? (i * 0.05).toFixed(2) : "0"}</RulerText></TickLabel>
              </React.Fragment>
            ))}
          </Scale>
          <Pointer width="12" height="19" viewBox="0 0 12 19"><path d="M.7 1v14l3.300-3 2.500 5.500 2-1-2.300-5h4.500z" fill="#fff" stroke="#000" /></Pointer>
        </Canvas>
        <Side>
          <SideRule $h={8} />
          <DockButton $m="2px 0 1px"><Cross /></DockButton><DockButton $m="1px 0 2px"><Detach /></DockButton>
          <SideRule />
        </Side>
      </DockRow>
      <HScroll>
        <HPiece $w={14} $b="0 1px 0 0"><Tri d="l" /></HPiece><Space $w={1379} /><HPiece $w={28} /><Grow /><HPiece $w={14} $b="0 0 0 1px"><Tri d="r" /></HPiece>
      </HScroll>
    </>
  );
}

function Summary() {
  const ticks = [16, 14, 12, 10, 8, 6, 4, 2, 0].map((v, i) => ({ x: Math.round(108 + i * 106.630), t: v ? v + " ms" : "0s", w: v > 9 ? 34 : v ? 27 : 14 }));
  return (
    <>
      <Header><HeaderRule $w={485} /><HeaderText w={88}>Function Summary</HeaderText><HeaderRule /></Header>
      <DockRow $h={478}>
        <Canvas $w={1065}>
          <Title><Fit w={308}>All Processes, Accumulated Exclusive Time per Function</Fit></Title>
          {ticks.map((t) => <TickLabel key={t.x} $top={16} style={{ left: t.x }}><RulerText w={t.w}>{t.t}</RulerText></TickLabel>)}
          <Grid ticks={ticks} $top={32} />
          <Rows $top={34} $gap={1}>
            {summary.map(([n, nw, v, vw, w, g]) => (
              <SumRow key={n}>
                <SumLeft>
                  {w < 60 && <Fit w={vw}>{v}</Fit>}
                  <SumBar $g={g} style={{ width: w }}>{w >= 60 && <Fit w={vw}>{v}</Fit>}</SumBar>
                </SumLeft>
                <Fit w={nw}>{n}</Fit>
              </SumRow>
            ))}
          </Rows>
          <Grid ticks={ticks} $top={34} $bottom={343} $o={0.25} />
        </Canvas>
      </DockRow>
    </>
  );
}

function ContextView() {
  return (
    <>
      <SplitGrip $h={5} />
      <Header><HeaderRule $w={497} /><HeaderText w={65}>Context View</HeaderText><HeaderRule /></Header>
      <Tabs>
        <TabIcon $b={6}><svg width="14" height="13" viewBox="0 0 14 13"><path d="M.5.500h13v4.500H.5zM.5 7.500h13V12H.5z" fill="#47c42c" stroke="#8a9a84" /><path d="M1 2h12" stroke="#9be387" /></svg></TabIcon>
        <Tab><Fit w={53}>Trace Info</Fit><Cross s={13} w={1.7} /></Tab>
        <Grow />
        <TabIcon $b={5}><svg width="15" height="16" viewBox="0 0 15 16"><path d="M7.500 0v16M0 8h15" stroke="#8fce80" strokeWidth="4.400" /><path d="M7.500 .5v15M.5 8h14" stroke="#35c41c" strokeWidth="3" /></svg></TabIcon>
      </Tabs>
      <Table>
        <TableBody>
          <HeadRow><HeadCell><Fit w={45}>Property</Fit></HeadCell><Fit w={30}>Value</Fit></HeadRow>
          {properties.map(([n, nw, v, vw, ind]) => (
            <Line key={n}><Prop $in={ind}><Fit w={nw}>{n}</Fit></Prop>{v && <Fit w={vw}>{v}</Fit>}</Line>
          ))}
        </TableBody>
        <VScroll>
          <VPiece $h={14} $b="0 0 1px"><Tri d="u" /></VPiece><VPiece $h={150} $b="0 0 1px" /><Grow /><VPiece $h={15} $b="1px 0 0"><Tri d="d" /></VPiece>
        </VScroll>
      </Table>
      <SplitGrip $h={6} />
      <Header><HeaderRule $w={490} /><HeaderText w={79}>Function Legend</HeaderText><HeaderRule /></Header>
      <Legend>
        <LegendRow><Swatch $e="#c40000" $a="#d40808" $z="#ff7c7c" /><Fit w={20}>MPI</Fit></LegendRow>
        <LegendRow><Swatch $e="#0000c4" $a="#0808d4" $z="#7c7cff" /><Fit w={40}>Monitor</Fit></LegendRow>
        <LegendRow><Swatch $e="#137f00" $a="#178a00" $z="#22ee00" /><Fit w={60}>Application</Fit></LegendRow>
      </Legend>
    </>
  );
}

export default function App() {
  return (
    <Screen>
      <Global />
      <TopPanel>
        <Mouse /><Space $w={3} /><Fit w={72}>Applications</Fit><Space $w={12} /><Folder home /><Space $w={3} /><Fit w={36}>Places</Fit>
        <Space $w={14} /><Folder /><Space $w={14} /><Globe /><Space $w={4} /><Mail /><Space $w={6} /><Term /><Space $w={8} /><Lens />
        <Grow />
        <Speaker /><Space $w={14} /><Fit w={140}>Shyam Arumugaswamy</Fit><Space $w={11} /><PagerCell><Fly w={17} /></PagerCell><Space $w={11} />
        <Fit w={73}>17 Jan, 16:55</Fit><Space $w={13} /><CpuGrid /><Space $w={14} /><Fly w={20} />
      </TopPanel>
      <TitleBar>
        <Tri d="d" /><Space $w={876} /><TitleText w={738}>Trace View - /home/hpc/h039y/h039y39/shyam/assign4/ge/scorep-20190117_1649_5461518612050127/traces.otf2 * - Vampir</TitleText>
        <Grow /><WinMark d="M1 4.500h7" /><Space $w={13} /><WinMark d="M1 4.500h7M4.500 1v7" /><Space $w={13} /><WinMark d="M1 .5l6 8M7 .5l-6 8" />
      </TitleBar>
      <MenuBar>
        <Fly w={15} c="#b4582a" /><Space $w={11} />
        <MenuItem w={19} $gap={15}>File</MenuItem><MenuItem w={21} $gap={14}>Edit</MenuItem><MenuItem w={30} $gap={14}>Chart</MenuItem>
        <MenuItem w={27} $gap={14}>Filter</MenuItem><MenuItem w={43} $gap={15}>Window</MenuItem><MenuItem w={25} $gap={0}>Help</MenuItem>
        <Grow />
        <MdiButton><MdiMark d="M3 6.500h7" /></MdiButton><MdiButton><MdiMark d="M5 3h5v5H5zM3 5.500h5V10H3z" /></MdiButton><MdiButton $gap={3}><MdiMark d="M3.500 3.500l6 6M9.500 3.500l-6 6" /></MdiButton>
      </MenuBar>
      <Toolbar>
        <Grip /><Space $w={3} />
        {tools.map((t, i) => <Tool key={i}>{t}</Tool>)}
        <ToolSep />
        <Tool $on><Tree /></Tool><Tool><Pin /></Tool><Tool $on><Bulb /></Tool>
        <Space $w={9} /><Grip /><Space $w={4} />
        <Overview>
          <OverviewFill /><Selection />
          <HaloText $x={1905} $y={2}><Fit w={49}>0.3823 s</Fit></HaloText>
          <HaloText $x={1983} $y={2}><Fit w={49}>0.3858 s</Fit></HaloText>
          <HaloText $x={1942} $y={19}><Fit w={52}>3.466 ms</Fit></HaloText>
        </Overview>
      </Toolbar>
      <Main>
        <LeftColumn><Timeline /><Metric /></LeftColumn>
        <RightColumn><Summary /><ContextView /></RightColumn>
      </Main>
      <Status><Fit w={49}>0.3857 s</Fit></Status>
      <TaskBar>
        <Space $w={3} /><Mouse s={19} /><Space $w={14} /><DesktopIcon /><Space $w={12} />
        <Task $w={198} $g={8}><Page /><Fit w={98}>assignment4.pdf</Fit></Task>
        <Task $w={200}><Fox /><Fit w={167}>[POS/ws4/cannon_src at m...</Fit></Task>
        <Task $w={201}><House /><Fit w={135}>home_at - File Manager</Fit></Task>
        <Task $on $w={198} $g={5}><Fly w={16} c="#d0601e" /><Fit w={168}>Trace View - /home/hpc/h0...</Fit></Task>
        <Task $w={300}><Term /><Fit w={167}>Terminal - h039y39@login2...</Fit></Task>
        <Space $w={635} /><TaskSep /><Grow /><TrashCell><Trash /></TrashCell>
      </TaskBar>
    </Screen>
  );
}
